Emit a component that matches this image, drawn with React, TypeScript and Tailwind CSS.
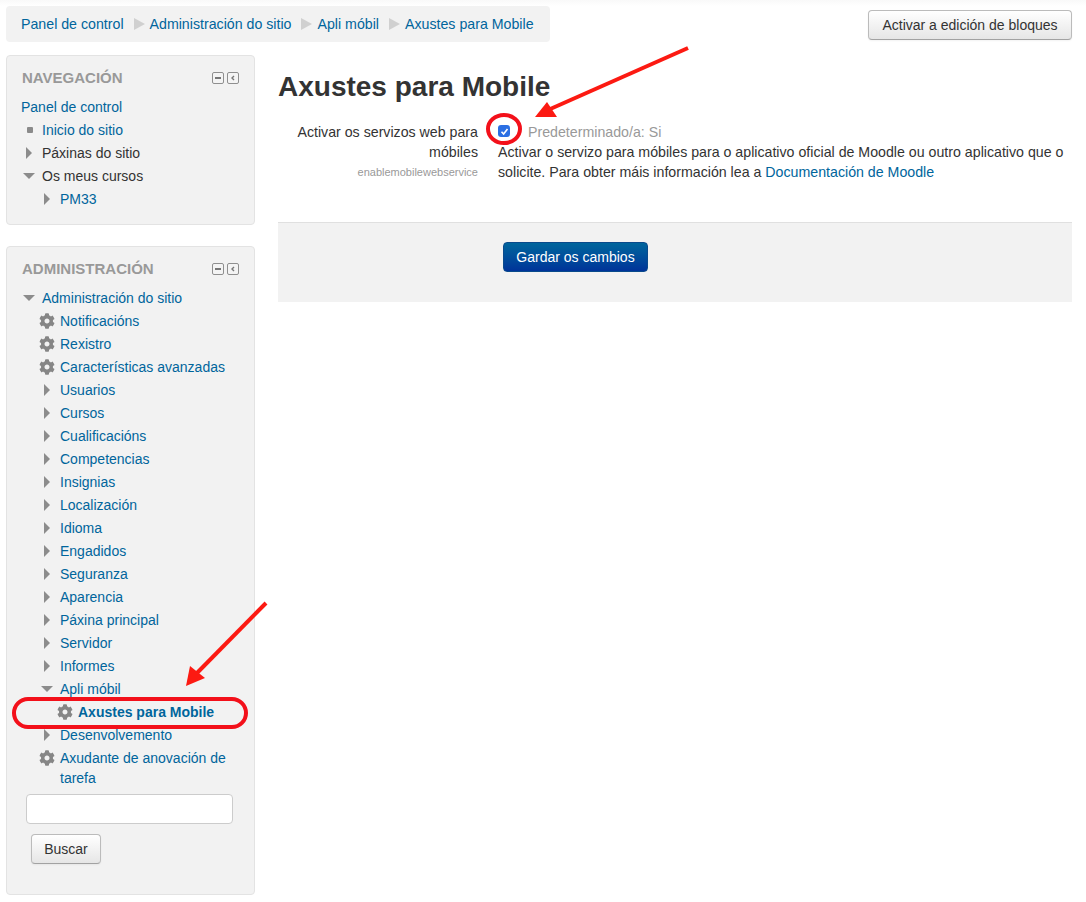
import { FaCog } from "react-icons/fa";

type Row = { label: string; level: number; icon: "gear" | "right" | "down" | "dot"; plain?: boolean; bold?: boolean };

const navRows: Row[] = [
  { label: "Inicio do sitio", level: 1, icon: "dot" },
  { label: "Páxinas do sitio", level: 1, icon: "right", plain: true },
  { label: "Os meus cursos", level: 1, icon: "down", plain: true },
  { label: "PM33", level: 2, icon: "right" },
];

const adminRows: Row[] = [
  { label: "Administración do sitio", level: 1, icon: "down" },
  { label: "Notificacións", level: 2, icon: "gear" },
  { label: "Rexistro", level: 2, icon: "gear" },
  { label: "Características avanzadas", level: 2, icon: "gear" },
  { label: "Usuarios", level: 2, icon: "right" },
  { label: "Cursos", level: 2, icon: "right" },
  { label: "Cualificacións", level: 2, icon: "right" },
  { label: "Competencias", level: 2, icon: "right" },
  { label: "Insignias", level: 2, icon: "right" },
  { label: "Localización", level: 2, icon: "right" },
  { label: "Idioma", level: 2, icon: "right" },
  { label: "Engadidos", level: 2, icon: "right" },
  { label: "Seguranza", level: 2, icon: "right" },
  { label: "Aparencia", level: 2, icon: "right" },
  { label: "Páxina principal", level: 2, icon: "right" },
  { label: "Servidor", level: 2, icon: "right" },
  { label: "Informes", level: 2, icon: "right" },
  { label: "Apli móbil", level: 2, icon: "down" },
  { label: "Axustes para Mobile", level: 3, icon: "gear", bold: true },
  { label: "Desenvolvemento", level: 2, icon: "right" },
  { label: "Axudante de anovación de tarefa", level: 2, icon: "gear" },
];

const TreeIcon = ({ icon }: { icon: Row["icon"] }) => {
  if (icon === "gear") return <FaCog className="h-4 w-4 text-[#868686]" />;
  if (icon === "dot") {
    return <span className="ml-[6px] mt-[5px] block h-[6px] w-[6px] rounded-[1px] bg-[#8a8a8a]" />;
  }
  if (icon === "down") {
    return (
      <svg width="16" height="16" viewBox="0 0 16 16" className="fill-[#8c8c8c]">
        <path d="M2 5h12l-6 6z" />
      </svg>
    );
  }
  return (
    <svg width="16" height="16" viewBox="0 0 16 16" className="fill-[#8c8c8c]">
      <path d="M5 2v12l6-6z" />
    </svg>
  );
};

const TreeRow = ({ row }: { row: Row }) => {
  const margin = row.level === 1 ? "pl-[14px]" : row.level === 2 ? "pl-[32px]" : "pl-[50px]";
  return (
    <li className={`flex pt-[1px] pb-[2px] text-[14px] leading-[20px] ${margin}`}>
      <span className="mr-[5px] mt-[2px] flex h-4 w-4 shrink-0 items-start">
        <TreeIcon icon={row.icon} />
      </span>
      {row.plain ? (
        <span className="text-[#333333]">{row.label}</span>
      ) : (
        <a className={`text-[#00659c] ${row.bold ? "font-bold" : ""}`}>{row.label}</a>
      )}
    </li>
  );
};

const BlockHeader = ({ title }: { title: string }) => (
  <div className="flex h-[40px] items-start justify-between pl-[15px] pr-[15px] pt-[13px]">
    <h3 className="text-[15px] font-bold leading-[18px] text-[#999999]">{title}</h3>
    <div className="mt-[3px] flex gap-[3px]">
      <span className="flex h-[12px] w-[12px] items-center justify-center rounded-[2px] border border-[#8f8f8f] bg-[#f4f4f4]">
        <span className="h-[2px] w-[6px] bg-[#777777]" />
      </span>
      <span className="flex h-[12px] w-[12px] items-center justify-center rounded-[2px] border border-[#8f8f8f] bg-[#f4f4f4]">
        <svg width="6" height="6" viewBox="0 0 6 6" className="fill-none stroke-[#777777] stroke-[1.4]">
          <path d="M4 1 2 3l2 2" />
        </svg>
      </span>
    </div>
  </div>
);

const BreadcrumbSep = () => (
  <svg width="11" height="12" viewBox="0 0 11 12" className="ml-[10px] mr-[5px] shrink-0 fill-[#d0d0d0]">
    <path d="M0 0v12l11-6z" />
  </svg>
);

const GreyButton = ({ label, className }: { label: string; className: string }) => (
  <button
    className={`rounded-[4px] border border-[#bbbbbb] border-b-[#a2a2a2] bg-gradient-to-b from-white to-[#e6e6e6] text-[14px] leading-[20px] text-[#333333] shadow-[0_1px_2px_rgba(0,0,0,0.05)] ${className}`}
  >
    {label}
  </button>
);

export default function App() {
  return (
    <div className="relative h-[902px] w-[1086px] overflow-hidden bg-white font-['Liberation_Sans',Arial,sans-serif] text-[#333333]">
      <div className="flex items-start justify-between bg-gradient-to-b from-[#f9f9f9] to-white to-[6px] pl-[6px] pr-[14px] pt-[6px]">
        <nav className="flex h-[36px] w-[544px] items-center rounded-[4px] bg-[#f2f2f2] pl-[15px] text-[14.2px] leading-[20px] text-[#00659c]">
          <a>Panel de control</a>
          <BreadcrumbSep />
          <a>Administración do sitio</a>
          <BreadcrumbSep />
          <a>Apli móbil</a>
          <BreadcrumbSep />
          <a>Axustes para Mobile</a>
        </nav>
        <GreyButton label="Activar a edición de bloques" className="mt-[4px] h-[30px] w-[204px]" />
      </div>

      <div className="mt-[13px] flex pl-[6px]">
        <aside className="flex w-[249px] shrink-0 flex-col gap-[21px]">
          <section className="rounded-[4px] border border-[#e3e3e3] bg-[#f2f2f2] pb-[13px]">
            <BlockHeader title="NAVEGACIÓN" />
            <ul>
              <li className="pb-[2px] pl-[14px] pt-[1px] text-[14px] leading-[20px] text-[#00659c]">Panel de control</li>
              {navRows.map((row) => (
                <TreeRow key={row.label} row={row} />
              ))}
            </ul>
          </section>
          <section className="rounded-[4px] border border-[#e3e3e3] bg-[#f2f2f2] pb-[30px]">
            <BlockHeader title="ADMINISTRACIÓN" />
            <ul>
              {adminRows.map((row) => (
                <TreeRow key={row.label} row={row} />
              ))}
            </ul>
            <input className="ml-[19px] mt-[4px] block h-[30px] w-[207px] rounded-[4px] border border-[#cccccc] bg-white" />
            <GreyButton label="Buscar" className="ml-[24px] mt-[10px] block h-[30px] w-[70px]" />
          </section>
        </aside>

        <main className="ml-[23px] w-[794px] shrink-0">
          <h2 className="h-[67px] pt-[14px] text-[28px] font-bold leading-[36px] text-[#333333]">Axustes para Mobile</h2>
          <div className="flex h-[100px] text-[14.2px] leading-[20px]">
            <div className="w-[200px] shrink-0 text-right">
              <div>Activar os servizos web para móbiles</div>
              <div className="text-[11px] text-[#999999]">enablemobilewebservice</div>
            </div>
            <div className="ml-[20px] w-[574px]">
              <div className="flex items-center">
                <span className="mb-[2px] flex h-[12px] w-[12px] items-center justify-center rounded-[3px] bg-[#2b6fe3]">
                  <svg width="9" height="9" viewBox="0 0 9 9" className="fill-none stroke-white stroke-[1.6]">
                    <path d="M1.5 4.8 3.6 7 7.5 2" />
                  </svg>
                </span>
                <span className="ml-[18px] text-[#999999]">Predeterminado/a: Si</span>
              </div>
              <p>
                Activar o servizo para móbiles para o aplicativo oficial de Moodle ou outro aplicativo que o solicite. Para
                obter máis información lea a <a className="text-[#00659c]">Documentación de Moodle</a>
              </p>
            </div>
          </div>
          <div className="h-[80px] border-t border-[#e0e0e0] bg-[#f2f2f2] pl-[225px] pt-[19px]">
            <button className="h-[30px] w-[145px] rounded-[4px] border border-[#0a4a8c] bg-gradient-to-b from-[#00659c] to-[#003399] text-[14px] leading-[20px] text-white">
              Gardar os cambios
            </button>
          </div>
        </main>
      </div>

      {/* red annotations drawn over the screenshot */}
      <svg width="1086" height="902" viewBox="0 0 1086 902" className="pointer-events-none absolute left-0 top-0">
        <path d="M688 48 548 110" stroke="#fc1a12" strokeWidth="4" fill="none" />
        <path d="M535 117 547 102 557 117z" fill="#fc1a12" />
        <ellipse cx="504" cy="129" rx="16" ry="14" stroke="#f3101a" strokeWidth="4" fill="none" />
        <path d="M266 603 196 674" stroke="#fc1a12" strokeWidth="4" fill="none" />
        <path d="M186 686 190 666 205 678z" fill="#fc1a12" />
        <rect x="14" y="699" width="232" height="28" rx="14" stroke="#f3101a" strokeWidth="4" fill="none" />
      </svg>
    </div>
  );
}
